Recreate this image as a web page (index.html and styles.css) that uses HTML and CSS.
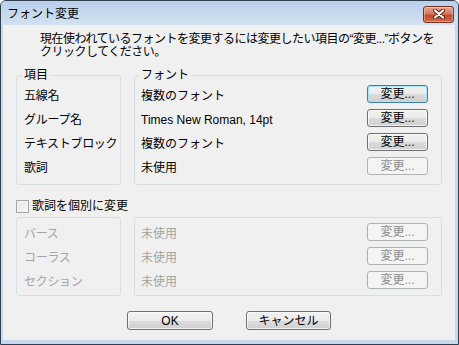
FILE: index.html
```html
<!DOCTYPE html>
<html lang="ja">
<head>
  <meta charset="UTF-8">
  <title>フォント変更</title>
  <link rel="stylesheet" href="styles.css">
</head>
<body>

  <div class="ventana">
    <div class="titulo">
      <span class="titulo-texto">フォント変更</span>
      <button class="cerrar" title="閉じる">
        <svg width="12" height="10" viewBox="0 0 12 10">
          <path d="M2 1.5 L10 8.5 M10 1.5 L2 8.5" stroke="#5a1f14" stroke-width="4" stroke-linecap="round"/>
          <path d="M2 1.5 L10 8.5 M10 1.5 L2 8.5" stroke="#fff" stroke-width="2.2" stroke-linecap="round"/>
        </svg>
      </button>
    </div>

    <div class="cliente">
      <p class="descripcion">現在使われているフォントを変更するには変更したい項目の“変更...”ボタンを<br>クリックしてください。</p>

      <div class="grupos">
        <fieldset class="grupo grupo-items">
          <legend>項目</legend>
          <div class="fila">五線名</div>
          <div class="fila">グループ名</div>
          <div class="fila">テキストブロック</div>
          <div class="fila">歌詞</div>
        </fieldset>
        <fieldset class="grupo grupo-fuentes">
          <legend>フォント</legend>
          <div class="fila"><span>複数のフォント</span><button class="boton defecto">変更...</button></div>
          <div class="fila"><span>Times New Roman, 14pt</span><button class="boton">変更...</button></div>
          <div class="fila"><span>複数のフォント</span><button class="boton">変更...</button></div>
          <div class="fila"><span>未使用</span><button class="boton" disabled>変更...</button></div>
        </fieldset>
      </div>

      <label class="casilla">
        <span class="caja"></span>
        <span>歌詞を個別に変更</span>
      </label>

      <div class="grupos apagado">
        <div class="grupo grupo-items">
          <div class="fila">バース</div>
          <div class="fila">コーラス</div>
          <div class="fila">セクション</div>
        </div>
        <div class="grupo grupo-fuentes">
          <div class="fila"><span>未使用</span><button class="boton" disabled>変更...</button></div>
          <div class="fila"><span>未使用</span><button class="boton" disabled>変更...</button></div>
          <div class="fila"><span>未使用</span><button class="boton" disabled>変更...</button></div>
        </div>
      </div>

      <div class="acciones">
        <button class="boton ancho-ok">OK</button>
        <button class="boton ancho-cancelar">キャンセル</button>
      </div>
    </div>
  </div>

</body>
</html>
```

FILE: styles.css
```css
body {
  margin: 0;
  font-family: "Liberation Sans", "Noto Sans CJK JP", sans-serif;
  font-size: 12px;
  color: #000;
  background: #fff;
}

.ventana {
  width: 459px;
  height: 345px;
  box-sizing: border-box;
  border: 1px solid #2f3d4d;
  border-radius: 6px 6px 0 0;
  background: #c6d9ee;
  display: flex;
  flex-direction: column;
  overflow: hidden;
}

.titulo {
  height: 24px;
  display: flex;
  align-items: center;
  justify-content: space-between;
  padding: 0 4px 0 6px;
  background: linear-gradient(#b9d0ea, #c8daee 60%, #d3e2f2);
}
.titulo-texto {
  line-height: 12px;
  padding-top: 1px;
}
.cerrar {
  width: 31px;
  height: 17px;
  margin-top: 2px;
  padding: 0;
  border: 1px solid #7a2f22;
  border-radius: 3px;
  background: linear-gradient(#e6a792, #d7795f 45%, #c24a2e 55%, #d2694b);
  box-shadow: inset 0 0 0 1px rgba(255,255,255,0.35);
  display: flex;
  align-items: center;
  justify-content: center;
}

.cliente {
  flex: 1;
  margin: 0 3px 4px 2px;
  background: #f0f0f0;
}

.descripcion {
  margin: 8px 0 0 37px;
  line-height: 13px;
  letter-spacing: -0.5px;
  white-space: nowrap;
}

.grupos {
  display: grid;
  grid-template-columns: 105px 308px;
  column-gap: 13px;
  margin: 10px 0 0 13px;
}
.grupo {
  margin: 0;
  min-width: 0;
  box-sizing: border-box;
  border: 1px solid #d5dfe5;
  border-radius: 3px;
}
.grupo legend {
  padding: 0 2px;
  margin-left: -2px;
  line-height: 12px;
}
fieldset.grupo {
  padding: 1px 13px 6px 7px;
}
.grupo-fuentes {
  padding-left: 6px;
}
fieldset.grupo-fuentes {
  padding-left: 6px;
}

.fila {
  height: 24px;
  box-sizing: border-box;
  padding-top: 4px;
  line-height: 20px;
  white-space: nowrap;
}
.grupo-items .fila {
  letter-spacing: -0.3px;
}
.grupo-fuentes .fila {
  display: grid;
  grid-template-columns: 1fr 61px;
  align-items: start;
}
.grupo-fuentes .fila .boton {
  margin-top: -1px;
}

.boton {
  height: 18px;
  padding: 0;
  font-family: "Liberation Sans", "Noto Sans CJK JP", sans-serif;
  font-size: 12px;
  line-height: 16px;
  color: #000;
  border: 1px solid #707070;
  border-radius: 3px;
  background: linear-gradient(#f2f2f2, #ebebeb 50%, #dddddd 50%, #cfcfcf);
  box-shadow: inset 0 0 0 1px rgba(255,255,255,0.7);
}
.boton.defecto {
  border-color: #3c7fb1;
  box-shadow: inset 0 0 0 1px #a8e2f8;
}
.boton:disabled {
  color: #8c8c8c;
  border-color: #adb2b5;
  background: #f4f4f4;
  box-shadow: none;
}

.casilla {
  display: flex;
  align-items: center;
  gap: 3px;
  height: 13px;
  margin: 15px 0 4px 13px;
  line-height: 13px;
}
.caja {
  width: 11px;
  height: 11px;
  border: 1px solid #a6a6a6;
  background: linear-gradient(135deg, #e4e4e4, #fafafa);
  box-shadow: inset 0 0 0 1px #f4f4f4;
}

.apagado {
  margin-top: 0;
}
.apagado .grupo {
  padding: 2px 13px 3px 7px;
  color: #a3a3a3;
}
.apagado .grupo-fuentes {
  padding-left: 6px;
}

.acciones {
  display: flex;
  justify-content: center;
  gap: 33px;
  margin-top: 15px;
}
.acciones .boton {
  height: 19px;
}
.ancho-ok {
  width: 86px;
}
.ancho-cancelar {
  width: 85px;
}
```
